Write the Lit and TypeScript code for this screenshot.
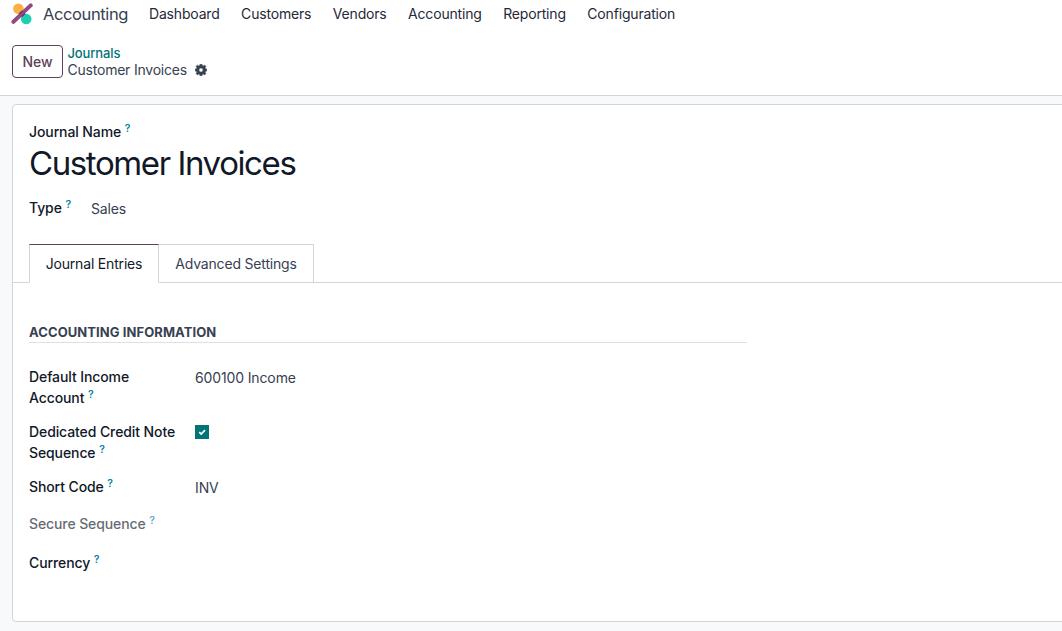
import { LitElement, html, css, nothing } from "lit";
import { customElement, property } from "lit/decorators.js";

@customElement("field-label")
class FieldLabel extends LitElement {
  @property() text = "";
  static styles = css`
    :host { display: block; font-weight: 500; line-height: 21px; color: #111827; letter-spacing: -0.1px; }
    .help { display: inline-block; height: 12px; line-height: 12px; font-size: 10.5px; font-weight: 600; color: #0180a5; vertical-align: 5px; margin-left: 0; }
  `;
  render() {
    return html`${this.text} <span class="help">?</span>`;
  }
}

@customElement("app-root")
class AppRoot extends LitElement {
  static styles = css`
    :host {
      display: flex; flex-direction: column; box-sizing: border-box; height: 631px; overflow: hidden;
      background: #f8f9fb; color: #374151; font: 14px/21px Inter, "Liberation Sans", sans-serif; letter-spacing: -0.18px;
    }
    * { box-sizing: border-box; }
    header { flex: none; height: 96px; background: #fff; border-bottom: 1px solid #d3d5da; }
    nav { display: flex; align-items: center; height: 28px; padding-left: 11px; color: #1f2937; }
    .logo { width: 22px; height: 22px; flex: none; }
    .app { width: 86px; font-size: 16.5px; letter-spacing: -0.38px; margin: 1px 20px 0 10px; color: #374151; white-space: nowrap; }
    .menu { display: flex; gap: 21.5px; margin-top: -1px; }
    .control { display: flex; align-items: center; padding: 17px 0 0 12px; gap: 4.5px; }
    .new { width: 51px; height: 33px; padding: 0; border: 1px solid #5f3f5a; border-radius: 4px; background: #fff; color: #5f3f5a; font: 500 14px/21px Inter, sans-serif; }
    .journals { font-size: 13px; font-weight: 500; line-height: 16px; color: #017478; height: 16px; letter-spacing: -0.12px; }
    .current { display: flex; align-items: center; gap: 8px; line-height: 17px; letter-spacing: -0.22px; }
    .gear { width: 12px; height: 12px; }
    .sheet { flex: none; width: 1100px; height: 518px; margin: 8px 0 0 12px; border: 1px solid #d3d5da; border-radius: 4px; background: #fff; padding-top: 16px; }
    .head { padding-left: 16px; height: 123px; }
    h1 { margin: 0; font-size: 33px; line-height: 42px; height: 40px; font-weight: 400; color: #111827; letter-spacing: -1.4px; white-space: nowrap; }
    .type { display: flex; gap: 20px; padding-top: 15px; }
    .value { padding-top: 1px; }
    .tabs { display: flex; height: 39px; padding-left: 16px; border-bottom: 1px solid #d3d5da; }
    .tab { height: 39px; border: 1px solid #d3d5da; border-left: 0; line-height: 38px; text-align: center; width: 155px; }
    .tab.active { width: 130px; border-left: 1px solid #d3d5da; border-top-color: #5f3f5a; border-bottom-color: #fff; color: #111827; }
    .group { width: 718px; margin: 39px 0 0 16px; }
    h2 { margin: 0; height: 21px; border-bottom: 1px solid #dee0e3; font-size: 13px; line-height: 20px; font-weight: 700; color: #374151; letter-spacing: 0.08px; }
    .fields { padding-top: 23px; }
    .row { display: grid; grid-template-columns: 150px 1fr; column-gap: 16px; margin-bottom: 13px; }
    .row.short { margin-bottom: 15px; }
    .row.muted { margin-bottom: 18px; }
    .row .value { letter-spacing: -0.13px; }
    .muted field-label { opacity: .65; }
    .check { display: block; width: 14px; height: 14px; margin-top: 3px; }
  `;

  row(label: string, value: unknown, kind = "") {
    return html`<div class="row ${kind}">
      <field-label .text=${label}></field-label>
      <div class="value">${value}</div>
    </div>`;
  }

  render() {
    const items = ["Dashboard", "Customers", "Vendors", "Accounting", "Reporting", "Configuration"];
    return html`
      <header>
        <nav>
          <svg class="logo" viewBox="0 0 22 22">
            <circle cx="7.4" cy="5.7" r="5.3" fill="#fbb045" />
            <circle cx="15.200" cy="16" r="5.3" fill="#1fcfb4" />
            <path d="M2.400 18.800L19.700 2.400" stroke="#8f4a80" stroke-width="4" stroke-linecap="round" />
            <path d="M8.200 10.800L11.300 7.900M10.800 13.600L14.100 10.500" stroke="#6d2f5c" stroke-width="1.200" />
          </svg>
          <span class="app">Accounting</span>
          <div class="menu">${items.map((i) => html`<span>${i}</span>`)}</div>
        </nav>
        <div class="control">
          <button class="new">New</button>
          <div>
            <div class="journals">Journals</div>
            <div class="current">
              <span>Customer Invoices</span>
              <svg class="gear" viewBox="0 0 12 12">
                <path fill="#374151" stroke="#374151" stroke-width=".4" fill-rule="evenodd" d="M4.900.2h2.200l.3 1.400.8.3L9.500 1 11 2.500l-.9 1.300.3.800 1.400.3v2.200l-1.400.3-.3.800.9 1.300L9.500 11l-1.300-.9-.8.3-.3 1.400H4.900l-.3-1.400-.8-.3-1.300.9L1 9.500l.9-1.300-.3-.8L.2 7.100V4.900l1.400-.3.3-.8L1 2.500 2.500 1l1.300.9.8-.3zM6 4a2 2 0 1 0 0 4 2 2 0 0 0 0-4z" />
              </svg>
            </div>
          </div>
        </div>
      </header>
      <main class="sheet">
        <div class="head">
          <field-label .text=${"Journal Name"}></field-label>
          <h1>Customer Invoices</h1>
          <div class="type"><field-label .text=${"Type"}></field-label><div class="value">Sales</div></div>
        </div>
        <div class="tabs">
          <div class="tab active">Journal Entries</div>
          <div class="tab">Advanced Settings</div>
        </div>
        <section class="group">
          <h2>ACCOUNTING INFORMATION</h2>
          <div class="fields">
            ${this.row("Default Income Account", "600100 Income")}
            ${this.row("Dedicated Credit Note Sequence", html`<svg class="check" viewBox="0 0 14 14">
              <rect width="14" height="14" fill="#017478" />
              <path d="M4.200 7.100L6.200 9.100L10 5.200" fill="none" stroke="#fff" stroke-width="1.700" />
            </svg>`)}
            ${this.row("Short Code", "INV", "short")}
            ${this.row("Secure Sequence", nothing, "muted")}
            ${this.row("Currency", nothing)}
          </div>
        </section>
      </main>
    `;
  }
}
